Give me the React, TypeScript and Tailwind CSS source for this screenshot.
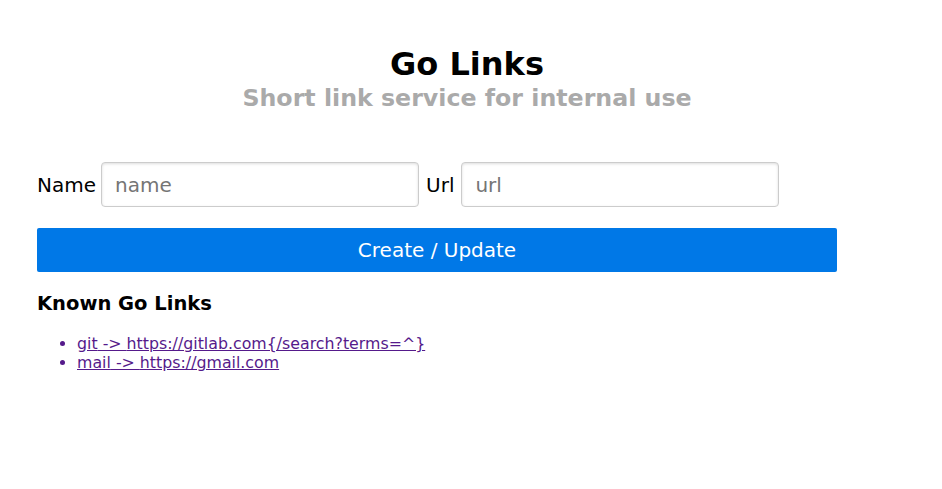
export default function App() {
  const links = [
    { name: 'git', url: 'https://gitlab.com{/search?terms=^}' },
    { name: 'mail', url: 'https://gmail.com' },
  ];

  return (
    <div className="min-h-[489px] bg-white font-['DejaVu_Sans',sans-serif] text-black">
      <div className="ml-[37px] w-[860px] pt-[50px]">
        {/* Header */}
        <div className="text-center">
          <h1 className="text-[32px] leading-[28px] font-bold">Go Links</h1>
          <p className="mt-[7px] text-[23.7px] leading-[26px] font-bold text-[#aaaaaa]">
            Short link service for internal use
          </p>
        </div>

        {/* Form */}
        <form className="mt-[51px] w-[800px]" onSubmit={(e) => e.preventDefault()}>
          <div className="flex items-center text-[20px]">
            <label className="mr-[5px]">Name</label>
            <input
              type="text"
              placeholder="name"
              className="h-[45px] w-[318px] rounded-[4px] border border-[#cccccc] px-[13px] text-[20px] shadow-[inset_0_1px_3px_#dddddd] outline-none placeholder:text-[#757575]"
            />
            <label className="ml-[7px] mr-[7px]">Url</label>
            <input
              type="text"
              placeholder="url"
              className="h-[45px] w-[318px] rounded-[4px] border border-[#cccccc] px-[13px] text-[20px] shadow-[inset_0_1px_3px_#dddddd] outline-none placeholder:text-[#757575]"
            />
          </div>
          <button
            type="submit"
            className="mt-[21px] h-[44px] w-[800px] rounded-[2px] bg-[#0078e7] text-[20px] text-white"
          >
            Create / Update
          </button>
        </form>

        {/* Known links */}
        <h3 className="mt-[21px] text-[19.5px] leading-[22px] font-bold">Known Go Links</h3>
        <ul className="mt-[19px] list-disc pl-[40px] text-[15.8px] leading-[19px] text-[#551a8b]">
          {links.map((link) => (
            <li key={link.name}>
              <a href="#" className="text-[#551a8b] underline">
                {link.name} -&gt; {link.url}
              </a>
            </li>
          ))}
        </ul>
      </div>
    </div>
  );
}
